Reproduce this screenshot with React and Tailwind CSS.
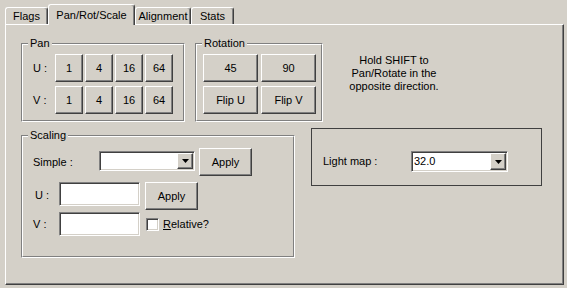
import React from 'react';

const raised =
  'border border-t-white border-l-white border-r-[#404040] border-b-[#404040] shadow-[inset_-1px_-1px_#808080]';
const sunken =
  'border border-t-[#808080] border-l-[#808080] border-r-white border-b-white shadow-[inset_1px_1px_#404040,inset_-1px_-1px_#d4d0c8] bg-white';

function Btn({ children, className = '' }) {
  return (
    <button type="button" className={`flex items-center justify-center bg-[#d4d0c8] leading-[13px] ${raised} ${className}`}>
      {children}
    </button>
  );
}

function Group({ label, className = '', children }) {
  return (
    <div className={`relative border border-t-[#808080] border-l-[#808080] border-r-white border-b-white ${className}`}>
      <div className="h-full border border-t-white border-l-white border-r-[#808080] border-b-[#808080]">{children}</div>
      {label && (
        <span className="absolute left-[6px] top-[-7px] bg-[#d4d0c8] px-[2px] leading-[13px]">{label}</span>
      )}
    </div>
  );
}

function Combo({ value = '', className = '' }) {
  return (
    <div className={`flex p-[1px] ${sunken} ${className}`}>
      <div className="flex-1 pl-[1px] leading-[17px] text-[#000]">{value}</div>
      <div className={`flex w-[16px] items-center justify-center bg-[#d4d0c8] ${raised}`}>
        <svg width="7" height="4" viewBox="0 0 7 4">
          <polygon points="0,0 7,0 3.5,4" fill="#000" />
        </svg>
      </div>
    </div>
  );
}

function Tab({ label, active, className = '' }) {
  return (
    <div
      className={`flex items-center justify-center rounded-t-[3px] border-t border-l border-r border-t-white border-l-white border-r-[#404040] bg-[#d4d0c8] shadow-[inset_-1px_0_#808080] ${
        active ? 'relative z-10 -mb-[1px] h-[21px]' : 'h-[17px]'
      } ${className}`}
    >
      {label}
    </div>
  );
}

export default function App() {
  return (
    <div className="h-[288px] w-[567px] overflow-hidden bg-[#d4d0c8] text-[11px] text-black" style={{ fontFamily: '"Liberation Sans", Arial, sans-serif' }}>
      {/* Tabs */}
      <div className="flex h-[24px] items-end pl-[5px]">
        <Tab label="Flags" className="w-[43px]" />
        <Tab label="Pan/Rot/Scale" active className="w-[87px]" />
        <Tab label="Alignment" className="w-[56px]" />
        <Tab label="Stats" className="w-[43px]" />
      </div>

      {/* Page */}
      <div className="ml-[5px] h-[261px] w-[559px] border border-t-white border-l-white border-r-[#404040] border-b-[#404040] pl-[15px] pt-[18px] shadow-[inset_-1px_-1px_#808080]">
        <div className="flex gap-[10px]">
          <Group label="Pan" className="h-[79px] w-[164px]">
            <div className="flex flex-col gap-[4px] pl-[10px] pt-[9px]">
              {['U :', 'V :'].map((row) => (
                <div key={row} className="flex items-center">
                  <span className="w-[22px]">{row}</span>
                  <div className="flex gap-[2px]">
                    {['1', '4', '16', '64'].map((n) => (
                      <Btn key={n} className="h-[28px] w-[28px]">{n}</Btn>
                    ))}
                  </div>
                </div>
              ))}
            </div>
          </Group>

          <Group label="Rotation" className="h-[79px] w-[128px]">
            <div className="grid grid-cols-[55px_55px] gap-x-[3px] gap-y-[4px] pl-[6px] pt-[9px]">
              <Btn className="h-[28px]">45</Btn>
              <Btn className="h-[28px]">90</Btn>
              <Btn className="h-[28px]">Flip U</Btn>
              <Btn className="h-[28px]">Flip V</Btn>
            </div>
          </Group>

          <p className="w-[122px] pt-[11px] text-center leading-[13px]">
            Hold SHIFT to
            <br />
            Pan/Rotate in the
            <br />
            opposite direction.
          </p>
        </div>

        <div className="mt-[6px] flex items-start gap-[16px]">
          <Group label="Scaling" className="mt-[7px] h-[123px] w-[274px]">
            <div className="pl-[10px] pt-[11px]">
              <div className="flex h-[28px] items-center">
                <span className="w-[66px]">Simple :</span>
                <Combo className="mb-[2px] h-[20px] w-[96px]" />
                <Btn className="ml-[4px] h-[28px] w-[53px]">Apply</Btn>
              </div>
              <div className="mt-[6px] flex items-start">
                <span className="mt-[5px] w-[26px] pl-[2px]">U :</span>
                <div className={`h-[24px] w-[81px] ${sunken}`} />
                <Btn className="ml-[5px] h-[28px] w-[53px]">Apply</Btn>
              </div>
              <div className="mt-[2px] flex items-center">
                <span className="w-[26px]">V :</span>
                <div className={`h-[24px] w-[81px] ${sunken}`} />
                <div className={`ml-[6px] h-[13px] w-[13px] ${sunken}`} />
                <span className="ml-[4px]">
                  <span className="underline">R</span>elative?
                </span>
              </div>
            </div>
          </Group>

          <div className="h-[58px] w-[231px] border border-[#404040]">
            <div className="flex items-center pl-[11px] pt-[22px]">
              <span className="w-[88px]">Light map :</span>
              <Combo value="32.0" className="h-[21px] w-[97px]" />
            </div>
          </div>
        </div>
      </div>
    </div>
  );
}
